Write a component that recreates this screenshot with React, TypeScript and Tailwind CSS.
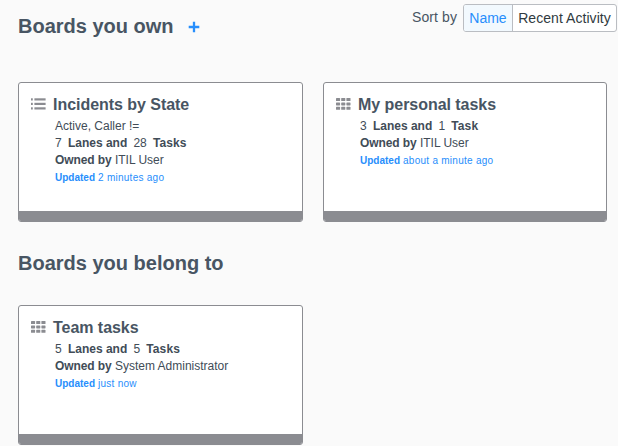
import React from "react";

type Board = {
  title: string;
  icon: "list" | "grid";
  filter?: string;
  lanes: number;
  tasks: number;
  owner: string;
  updated: string;
};

const owned: Board[] = [
  { title: "Incidents by State", icon: "list", filter: "Active, Caller !=", lanes: 7, tasks: 28, owner: "ITIL User", updated: "2 minutes ago" },
  { title: "My personal tasks", icon: "grid", lanes: 3, tasks: 1, owner: "ITIL User", updated: "about a minute ago" },
];

const member: Board[] = [
  { title: "Team tasks", icon: "grid", lanes: 5, tasks: 5, owner: "System Administrator", updated: "just now" },
];

function ListIcon() {
  return (
    <svg width="15" height="12" viewBox="0 0 15 12" fill="#8b8c91" className="-mt-[2px] block shrink-0">
      {[0.3, 4.8, 9.3].map((y) => (
        <g key={y}>
          <rect x="0" y={y} width="1.8" height="2.2" />
          <rect x="3.4" y={y} width="11.2" height="2.2" />
        </g>
      ))}
    </svg>
  );
}

function GridIcon() {
  return (
    <svg width="15" height="12" viewBox="0 0 15 12" fill="#8b8c91" className="-mt-[2px] block shrink-0">
      {[0, 4.4, 8.8].map((y) =>
        [0, 5.2, 10.4].map((x) => <rect key={`${x}-${y}`} x={x} y={y} width="4.1" height="3" rx="0.6" />),
      )}
    </svg>
  );
}

function BoardCard({ board }: { board: Board }) {
  return (
    <article className="flex h-[140px] flex-col overflow-hidden rounded-[3px] border border-[#8b8c91] bg-white">
      <div className="flex-1 pt-3 pl-3">
        <h3 className="flex h-5 items-center gap-[7px] text-base font-bold tracking-[-0.04px]">
          {board.icon === "list" ? <ListIcon /> : <GridIcon />}
          <span className="whitespace-nowrap">{board.title}</span>
        </h3>
        <div className="pt-[3px] pl-6 text-xs leading-[17px] whitespace-nowrap text-[#414c57]">
          {board.filter && <p>{board.filter}</p>}
          <p className="flex gap-[6.2px]">
            <span>{board.lanes}</span>
            <b>Lanes and</b>
            <span>{board.tasks}</span>
            <b className="tracking-[0.1px]">{board.tasks === 1 ? "Task" : "Tasks"}</b>
          </p>
          <p>
            <b className="tracking-[-0.1px]">Owned by</b> {board.owner}
          </p>
          <p className="text-[10px] tracking-[0.26px] text-[#278efc]">
            <b className="tracking-normal">Updated</b> {board.updated}
          </p>
        </div>
      </div>
      <div className="h-[10px] bg-[#8b8c91]" />
    </article>
  );
}

export default function App() {
  return (
    <main className="h-[446px] w-[618px] overflow-hidden bg-[#fafafa] font-['Liberation_Sans',Arial,sans-serif] text-[#485563]">
      <header className="flex h-[82px] items-start justify-between pr-px pl-[18px]">
        <h2 className="flex items-center gap-[14px] pt-3 text-xl leading-7 font-bold">
          Boards you own
          <svg width="12" height="12" viewBox="0 0 12 12" className="mt-[2px]" aria-label="Add board">
            <path d="M6 0.7v10.6M0.7 6h10.6" stroke="#278efc" strokeWidth="2.3" />
          </svg>
        </h2>
        <div className="flex pt-1 text-sm">
          <span className="pt-[3px] pr-[6px] tracking-[0.1px]">Sort by</span>
          <div className="flex h-7 overflow-hidden rounded-[3px] border border-[#babdc2] bg-white leading-[26px]">
            <button className="w-[49px] border-r border-[#babdc2] bg-[#f2f9fe] text-[#278efc]">Name</button>
            <button className="w-[103px] tracking-[0.06px] text-[#303a40]">Recent Activity</button>
          </div>
        </div>
      </header>
      <section className="grid grid-cols-[285px_284px] gap-5 pl-[18px]">
        {owned.map((b) => (
          <BoardCard key={b.title} board={b} />
        ))}
      </section>
      <h2 className="h-[83px] pt-[27px] pl-[18px] text-xl leading-7 font-bold">Boards you belong to</h2>
      <section className="grid grid-cols-[285px] pl-[18px]">
        {member.map((b) => (
          <BoardCard key={b.title} board={b} />
        ))}
      </section>
    </main>
  );
}
